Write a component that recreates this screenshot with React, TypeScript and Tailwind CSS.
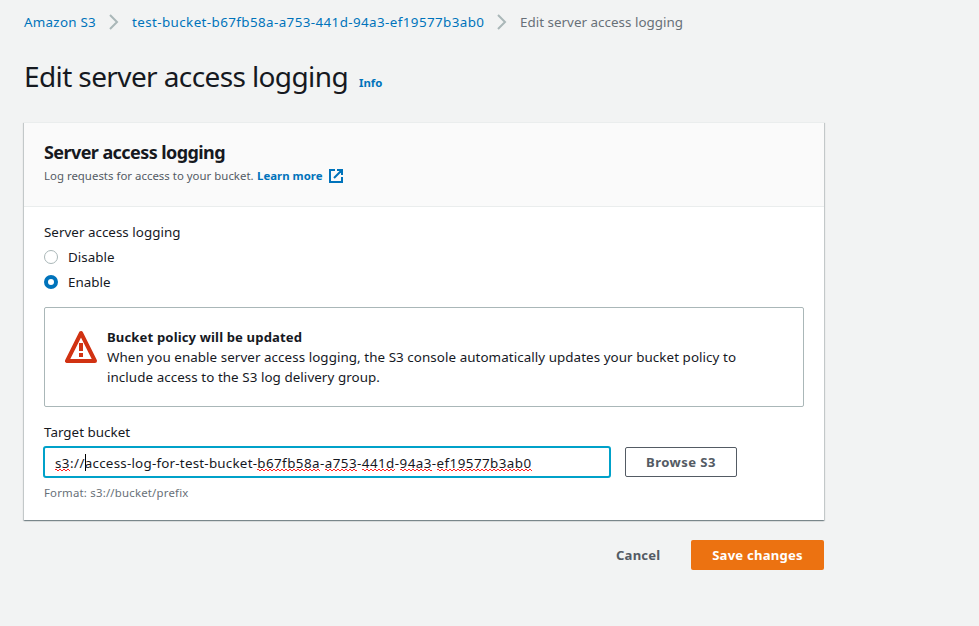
import type { ReactNode } from "react";

function Chevron({ className }: { className: string }) {
  return (
    <svg className={className} width="10" height="16" viewBox="0 0 10 16" fill="none" stroke="#aab7b8" strokeWidth="2">
      <path d="M1 1l7 7-7 7" />
    </svg>
  );
}

function ExternalIcon() {
  return (
    <svg className="ml-1.5 shrink-0" width="14" height="14" viewBox="0 0 14 14" fill="none" stroke="#0073bb" strokeWidth="2">
      <path d="M6 1H1v12h12V8M8 1h5v5M13 1L5 9" />
    </svg>
  );
}

function WarningIcon() {
  return (
    <svg className="mt-[3px] shrink-0" width="32" height="33" viewBox="0 0 32 33" fill="none">
      <path d="M16 3L2 31h28L16 3z" stroke="#d13212" strokeWidth="4" strokeLinejoin="round" />
      <path d="M14 13h4v8h-4zM14 23h4v4h-4z" fill="#d13212" />
    </svg>
  );
}

function Radio({ checked, children }: { checked?: boolean; children: ReactNode }) {
  return (
    <label className="flex h-[25px] items-center">
      <span
        className={
          checked
            ? "mr-2.5 size-3.5 rounded-full border-[4.5px] border-[#0073bb] bg-white"
            : "mr-2.5 size-3.5 rounded-full border border-[#aab7b8] bg-white"
        }
      />
      {children}
    </label>
  );
}

function Misspelled({ children }: { children: ReactNode }) {
  return (
    <span className="bg-[linear-gradient(90deg,#f22_50%,transparent_50%),linear-gradient(90deg,transparent_50%,#f22_50%)] [background-position:0_16px,0_17px] bg-size-[4px_1px] bg-repeat-x">
      {children}
    </span>
  );
}

export default function App() {
  return (
    <div className="h-[626px] w-[979px] overflow-hidden bg-[#f2f3f3] pl-6 font-['Noto_Sans',sans-serif] text-[13.4px] leading-5 tracking-[0.02px] whitespace-nowrap text-[#16191f]">
      <nav className="flex h-11 items-center">
        <a className="w-[72px] tracking-[0.25px] text-[#0073bb]">Amazon S3</a>
        <Chevron className="mr-[13px] ml-[13px]" />
        <a className="w-[352px] tracking-[0.4px] text-[#0073bb]">test-bucket-b67fb58a-a753-441d-94a3-ef19577b3ab0</a>
        <Chevron className="mr-[13px] ml-[13px]" />
        <span className="text-[#687078]">Edit server access logging</span>
      </nav>

      <div className="flex h-[78px] items-baseline pt-3.5">
        <h1 className="w-[335px] text-[28px] leading-9 tracking-[-0.61px]">Edit server access logging</h1>
        <a className="text-[11.4px] font-bold text-[#0073bb]">Info</a>
      </div>

      <main className="w-[800px]">
        <section className="h-[398px] border-t border-[#eaeded] bg-white shadow-[0_1px_1px_0_rgba(0,28,36,0.3),1px_1px_1px_0_rgba(0,28,36,0.15),-1px_1px_1px_0_rgba(0,28,36,0.15)]">
          <header className="h-[84px] border-b border-[#eaeded] bg-[#fafafa] px-5 pt-[18px]">
            <h2 className="text-[18px] leading-[22px] font-bold tracking-[-0.58px]">Server access logging</h2>
            <div className="mt-[3px] flex h-5 items-center text-[11.4px] text-[#545b64]">
              <span className="w-[213px]">Log requests for access to your bucket.</span>
              <a className="w-[66px] font-bold text-[#0073bb]">Learn more</a>
              <ExternalIcon />
            </div>
          </header>

          <div className="px-5 pt-[15px]">
            <div className="mb-0.5">Server access logging</div>
            <Radio>Disable</Radio>
            <Radio checked>Enable</Radio>

            <div className="mt-[13px] flex h-[100px] rounded-[2px] border border-[#aab7b8] px-5 pt-[19px]">
              <WarningIcon />
              <div className="ml-2.5">
                <div className="text-[13.1px] font-bold tracking-[0.13px]">Bucket policy will be updated</div>
                <p className="tracking-[0.06px]">
                  When you enable server access logging, the S3 console automatically updates your bucket policy to
                  <br />
                  include access to the S3 log delivery group.
                </p>
              </div>
            </div>

            <div className="mt-[15px]">Target bucket</div>
            <div className="mt-1 -ml-px flex items-center">
              <div className="flex h-8 w-[568px] items-center rounded-[3px] border-2 border-[#00a1c9] pt-0.5 pl-[10px] tracking-[0.44px]">
                <Misspelled>s3</Misspelled>
                <span>://</span>
                <span className="-mr-px -mt-0.5 h-[17px] w-px bg-black" />
                <span className="tracking-[0.22px]">access-log-for-test-bucket-</span>
                <Misspelled>b67fb58a</Misspelled>-<Misspelled>a753</Misspelled>-<Misspelled>441d</Misspelled>-
                <Misspelled>94a3</Misspelled>-<Misspelled>ef19577b3ab0</Misspelled>
              </div>
              <button className="ml-3.5 h-[30px] w-28 rounded-[2px] border border-[#545b64] text-[13.1px] font-bold tracking-[0.45px] text-[#545b64]">
                Browse S3
              </button>
            </div>
            <div className="mt-[5px] text-[11.4px] tracking-[0.2px] text-[#687078]">Format: s3://bucket/prefix</div>
          </div>
        </section>

        <div className="mt-5 flex items-center justify-end text-[13.1px]">
          <button className="mr-[31px] w-[44px] font-bold tracking-[0.2px] text-[#545b64]">Cancel</button>
          <button className="h-[30px] w-[133px] rounded-[2px] bg-[#ec7211] font-bold tracking-[0.22px] text-white">Save changes</button>
        </div>
      </main>
    </div>
  );
}
